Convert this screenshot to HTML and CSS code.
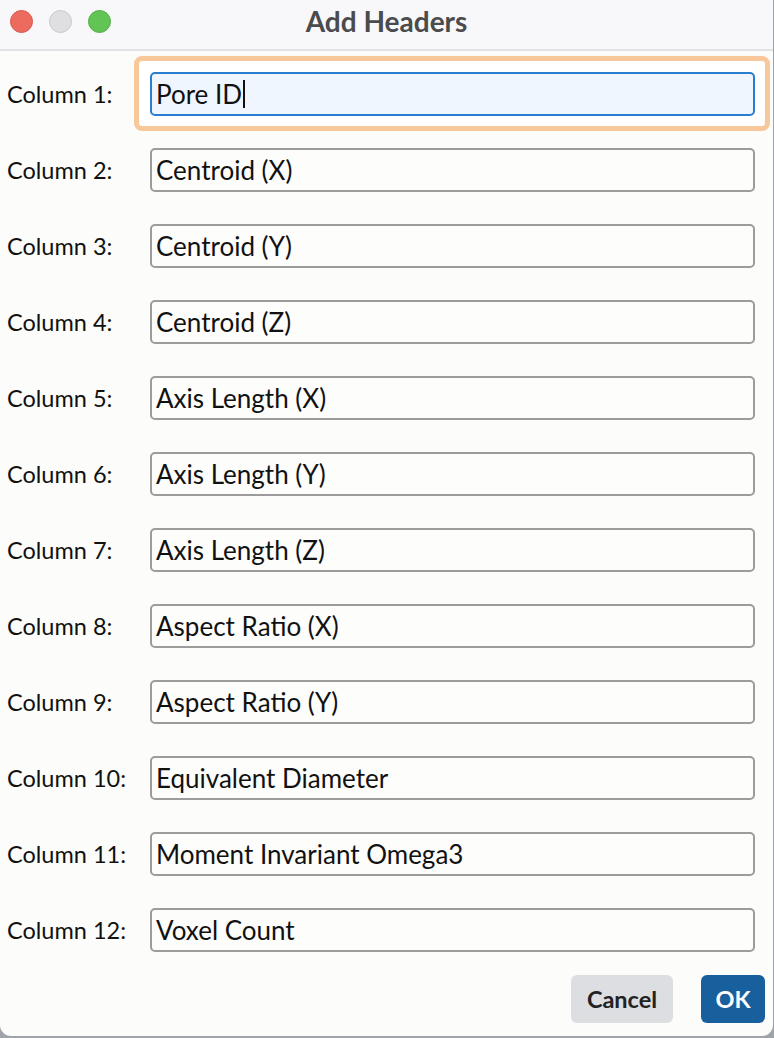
FILE: index.html
```html
<!DOCTYPE html>
<html>
<head>
<meta charset="utf-8">
<link rel="stylesheet" href="styles.css">
</head>
<body>
<div class="window">
  <div class="titlebar">
    <div class="lights">
      <span class="light red"></span>
      <span class="light grey"></span>
      <span class="light green"></span>
    </div>
    <div class="title">Add Headers</div>
  </div>
  <div class="form">
    <div class="row"><label class="lbl">Column 1:</label><div class="field focused"><div class="input">Pore ID<span class="caret"></span></div></div></div>
    <div class="row"><label class="lbl">Column 2:</label><div class="field"><div class="input">Centroid (X)</div></div></div>
    <div class="row"><label class="lbl">Column 3:</label><div class="field"><div class="input">Centroid (Y)</div></div></div>
    <div class="row"><label class="lbl">Column 4:</label><div class="field"><div class="input">Centroid (Z)</div></div></div>
    <div class="row"><label class="lbl">Column 5:</label><div class="field"><div class="input">Axis Length (X)</div></div></div>
    <div class="row"><label class="lbl">Column 6:</label><div class="field"><div class="input">Axis Length (Y)</div></div></div>
    <div class="row"><label class="lbl">Column 7:</label><div class="field"><div class="input">Axis Length (Z)</div></div></div>
    <div class="row"><label class="lbl">Column 8:</label><div class="field"><div class="input">Aspect Ratio (X)</div></div></div>
    <div class="row"><label class="lbl">Column 9:</label><div class="field"><div class="input">Aspect Ratio (Y)</div></div></div>
    <div class="row"><label class="lbl">Column 10:</label><div class="field"><div class="input">Equivalent Diameter</div></div></div>
    <div class="row"><label class="lbl">Column 11:</label><div class="field"><div class="input">Moment Invariant Omega3</div></div></div>
    <div class="row"><label class="lbl">Column 12:</label><div class="field"><div class="input">Voxel Count</div></div></div>
  </div>
  <div class="buttons">
    <button class="btn cancel">Cancel</button>
    <button class="btn ok">OK</button>
  </div>
</div>
</body>
</html>
```
FILE: styles.css
```css
html, body {
  margin: 0;
  padding: 0;
}
body {
  width: 774px;
  height: 1038px;
  background: #9fa3aa;
  font-family: Lato, "Noto Sans", sans-serif;
  overflow: hidden;
}
.window {
  width: 773px;
  height: 1036px;
  background: #fcfcfa;
  border-radius: 0 0 11px 11px;
  display: flex;
  flex-direction: column;
}
.titlebar {
  height: 49px;
  background: #f8f8fb;
  border-bottom: 2px solid #e2e2e2;
  position: relative;
  display: flex;
  align-items: center;
  justify-content: center;
}
.lights {
  position: absolute;
  left: 10px;
  top: 10px;
  display: flex;
  gap: 16px;
}
.light {
  width: 23px;
  height: 23px;
  border-radius: 50%;
  display: block;
  box-sizing: border-box;
}
.red { background: #ec6a5e; border: 1px solid #d55a4f; }
.grey { background: #dfdfe1; border: 1px solid #c9c9cc; }
.green { background: #61c454; border: 1px solid #55ad48; }
.title {
  font-weight: 700;
  font-size: 28px;
  color: #4b4b4d;
  margin-top: -8px;
}
.form {
  display: flex;
  flex-direction: column;
  gap: 32px;
  padding-top: 21px;
}
.row {
  display: flex;
  align-items: center;
  height: 44px;
}
.lbl {
  width: 150px;
  padding-left: 7px;
  box-sizing: border-box;
  font-size: 23.5px;
  color: #111;
}
.field {
  width: 605px;
  height: 44px;
  position: relative;
}
.input {
  box-sizing: border-box;
  width: 100%;
  height: 100%;
  border: 2px solid #9c9c9c;
  border-radius: 5px;
  background: #fdfdfb;
  font-size: 26px;
  color: #111;
  padding-left: 4px;
  display: flex;
  align-items: center;
}
.focused::before {
  content: "";
  position: absolute;
  left: -16px;
  top: -16px;
  right: -15px;
  bottom: -15px;
  border: 5px solid #f8c89b;
  border-radius: 8px;
  background: #ffffff;
}
.focused .input {
  position: relative;
  border-color: #2a7ccf;
  background: #eff6ff;
}
.caret {
  display: inline-block;
  width: 2px;
  height: 28px;
  background: #111;
  margin-left: 1px;
}
.buttons {
  display: flex;
  justify-content: flex-end;
  gap: 28px;
  padding: 23px 8px 0 0;
}
.btn {
  border: none;
  border-radius: 6px;
  font-family: Lato, "Noto Sans", sans-serif;
  font-weight: 700;
  font-size: 23.5px;
  height: 48px;
  padding: 0;
}
.cancel {
  width: 102px;
  background: #dcdee2;
  color: #222;
}
.ok {
  width: 64px;
  background: #185f9d;
  color: #ffffff;
}
```
